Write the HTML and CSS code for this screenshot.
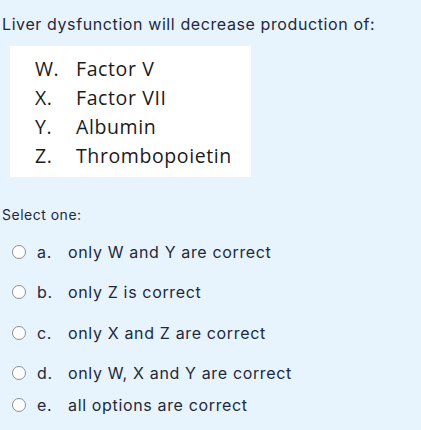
FILE: index.html
```html
<!DOCTYPE html>
<html>
<head>
<meta charset="utf-8">
<link rel="stylesheet" href="styles.css">
</head>
<body>
<div class="question">
  <p class="qtext">Liver dysfunction will decrease production of:</p>
  <div class="figure">
    <ol class="items">
      <li><span class="mark">W.</span><span>Factor V</span></li>
      <li><span class="mark">X.</span><span>Factor VII</span></li>
      <li><span class="mark">Y.</span><span>Albumin</span></li>
      <li><span class="mark">Z.</span><span>Thrombopoietin</span></li>
    </ol>
  </div>
  <p class="prompt">Select one:</p>
  <div class="answers">
    <label class="opt"><span class="radio"></span><span class="letter">a.</span><span>only W and Y are correct</span></label>
    <label class="opt"><span class="radio"></span><span class="letter">b.</span><span>only Z is correct</span></label>
    <label class="opt"><span class="radio"></span><span class="letter">c.</span><span>only X and Z are correct</span></label>
    <label class="opt"><span class="radio"></span><span class="letter">d.</span><span>only W, X and Y are correct</span></label>
    <label class="opt"><span class="radio"></span><span class="letter">e.</span><span>all options are correct</span></label>
  </div>
</div>
</body>
</html>
```

FILE: styles.css
```css
html, body {
  margin: 0;
  padding: 0;
  background: #e7f3fd;
}
body {
  font-family: "Inter", "Liberation Sans", sans-serif;
  color: #1d2a3a;
}
.question {
  padding: 13px 0 0 2px;
}
.qtext {
  margin: 0;
  font-size: 16px;
  letter-spacing: 0.6px;
  line-height: 22px;
}
.figure {
  margin: 11px 0 0 8px;
  width: 241px;
  height: 131px;
  background: #ffffff;
  box-sizing: border-box;
  padding: 8px 0 0 25px;
}
.items {
  list-style: none;
  margin: 0;
  padding: 0;
  font-family: "Open Sans", "Lato", sans-serif;
  font-size: 19.5px;
  letter-spacing: 0.6px;
  line-height: 29px;
  color: #1b1b1b;
}
.items li {
  display: flex;
}
.items .mark {
  width: 41px;
}
.prompt {
  margin: 29px 0 0 0;
  font-size: 14px;
  letter-spacing: 0.5px;
  line-height: 18px;
}
.answers {
  margin-top: 17px;
  display: flex;
  flex-direction: column;
}
.opt {
  display: flex;
  align-items: center;
  height: 22px;
  margin-bottom: 18px;
  font-size: 16px;
  letter-spacing: 0.65px;
}
.opt:nth-child(2) { margin-bottom: 19px; }
.opt:nth-child(4) { margin-bottom: 10px; }
.opt:last-child { margin-bottom: 0; }
.radio {
  width: 12px;
  height: 12px;
  border: 1px solid #8a8f96;
  border-radius: 50%;
  background: #fff;
  margin: 0 11px 0 10px;
  flex: none;
}
.letter {
  width: 31px;
}
```
